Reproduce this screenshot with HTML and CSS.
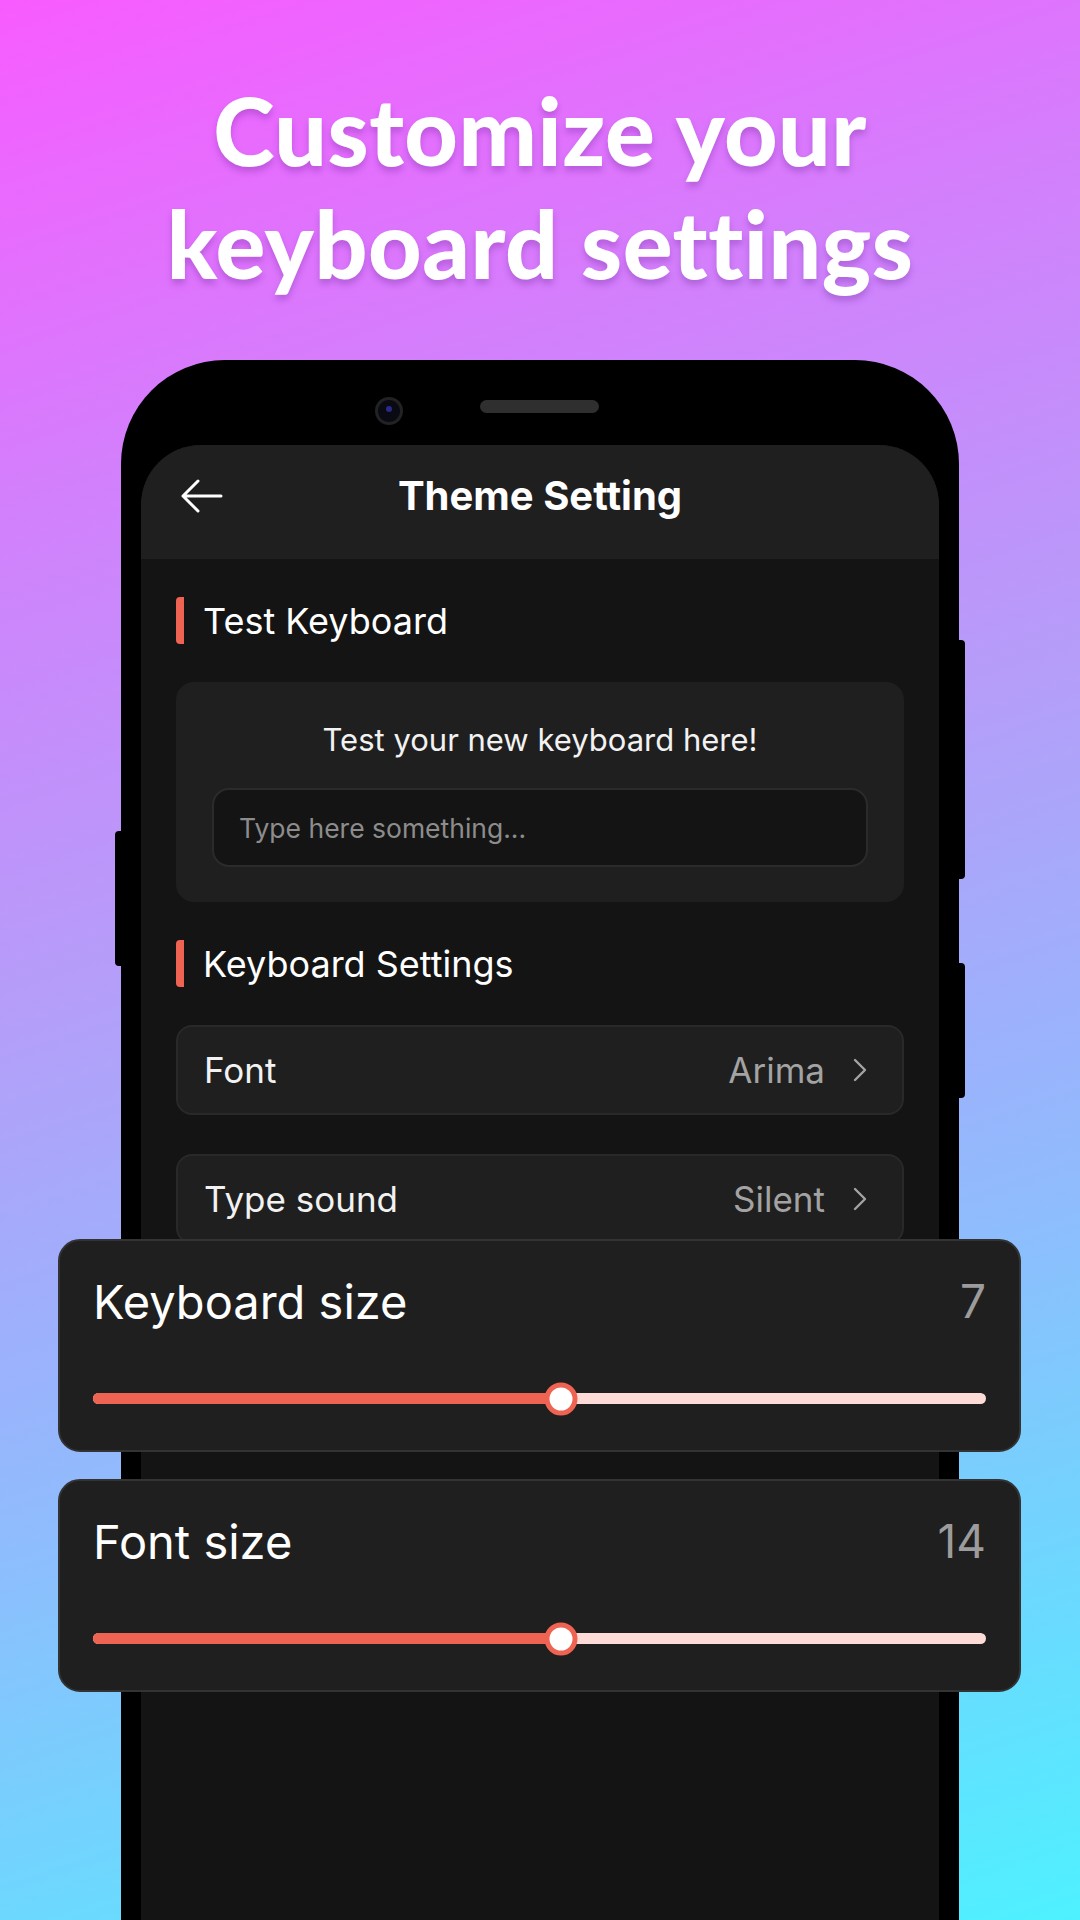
FILE: index.html
```html
<!DOCTYPE html>
<html lang="en">
<head>
    <meta charset="UTF-8">
    <meta name="viewport" content="width=device-width, initial-scale=1.0">
    <title>Theme Setting</title>
    <link rel="stylesheet" href="styles.css">
</head>
<body>
    <div class="page">
        <h1 class="headline">Customize your<br>keyboard settings</h1>

        <div class="phone">
            <span class="side-btn left-btn"></span>
            <span class="side-btn right-btn-1"></span>
            <span class="side-btn right-btn-2"></span>

            <div class="notch">
                <div class="camera"><span class="lens"></span></div>
                <div class="speaker"></div>
            </div>

            <div class="screen">
                <div class="app-bar">
                    <svg class="back" width="44" height="36" viewBox="0 0 44 36">
                        <path d="M42 18H4M19 3L4 18L19 33" fill="none" stroke="#fff" stroke-width="3" stroke-linecap="round" stroke-linejoin="round"/>
                    </svg>
                    <div class="app-title">Theme Setting</div>
                    <div></div>
                </div>

                <div class="content">
                    <div class="section-title">Test Keyboard</div>
                    <div class="test-card">
                        <div class="test-text">Test your new keyboard here!</div>
                        <div class="test-input">Type here something...</div>
                    </div>

                    <div class="section-title">Keyboard Settings</div>
                    <div class="setting-row">
                        <span class="row-label">Font</span>
                        <span class="row-value">Arima</span>
                        <svg class="chevron" width="16" height="26" viewBox="0 0 16 26">
                            <path d="M3 3L13 13L3 23" fill="none" stroke="#a3a3a3" stroke-width="2.4" stroke-linecap="round" stroke-linejoin="round"/>
                        </svg>
                    </div>
                    <div class="setting-row">
                        <span class="row-label">Type sound</span>
                        <span class="row-value">Silent</span>
                        <svg class="chevron" width="16" height="26" viewBox="0 0 16 26">
                            <path d="M3 3L13 13L3 23" fill="none" stroke="#a3a3a3" stroke-width="2.4" stroke-linecap="round" stroke-linejoin="round"/>
                        </svg>
                    </div>
                </div>
            </div>
        </div>

        <!-- cards floating over the phone -->
        <div class="float-cards">
            <div class="slider-card">
                <div class="slider-head">
                    <span class="slider-label">Keyboard size</span>
                    <span class="slider-value">7</span>
                </div>
                <div class="track">
                    <div class="track-fill" style="width: 52.4%"></div>
                    <div class="thumb" style="left: 52.4%"></div>
                </div>
            </div>
            <div class="slider-card">
                <div class="slider-head">
                    <span class="slider-label">Font size</span>
                    <span class="slider-value">14</span>
                </div>
                <div class="track">
                    <div class="track-fill" style="width: 52.4%"></div>
                    <div class="thumb" style="left: 52.4%"></div>
                </div>
            </div>
        </div>
    </div>
</body>
</html>
```

FILE: styles.css
```css
body {
    margin: 0;
    padding: 0;
    font-family: Inter, "Noto Sans", sans-serif;
}
.page {
    position: relative;
    width: 1080px;
    height: 1920px;
    overflow: hidden;
    background: linear-gradient(162deg, #f85bff 0%, #d37ffc 22%, #b49ef9 45%, #8fbcfd 68%, #4ef1ff 100%);
}
.headline {
    margin: 0;
    padding-top: 74px;
    font-family: Lato, sans-serif;
    font-weight: 900;
    font-size: 93px;
    line-height: 113px;
    letter-spacing: 0.5px;
    text-align: center;
    color: #fff;
    text-shadow: 0 5px 6px rgba(90, 30, 140, 0.28);
}

/* phone frame */
.phone {
    position: relative;
    width: 798px;
    height: 1561px;
    margin: 60px 0 0 121px;
    padding: 0 20px;
    background: #000;
    border-radius: 104px 104px 0 0;
}
.side-btn {
    position: absolute;
    width: 7px;
    background: #000;
}
.left-btn {
    left: -6px;
    top: 471px;
    height: 135px;
    border-radius: 4px 0 0 4px;
}
.right-btn-1 {
    right: -6px;
    top: 280px;
    height: 239px;
    border-radius: 0 4px 4px 0;
}
.right-btn-2 {
    right: -6px;
    top: 603px;
    height: 135px;
    border-radius: 0 4px 4px 0;
}
.notch {
    display: flex;
    align-items: center;
    gap: 77px;
    height: 85px;
    padding-left: 234px;
    padding-top: 16px;
    box-sizing: border-box;
}
.camera {
    width: 28px;
    height: 28px;
    border-radius: 50%;
    background: #0a0a12;
    border: 3px solid #222;
    box-sizing: border-box;
    position: relative;
}
.lens {
    position: absolute;
    left: 8px;
    top: 6px;
    width: 6px;
    height: 6px;
    border-radius: 50%;
    background: #2a2a8a;
}
.speaker {
    width: 119px;
    height: 13px;
    border-radius: 7px;
    background: #2f2f2f;
    margin-top: -8px;
}

/* screen */
.screen {
    height: 1476px;
    background: #141414;
    border-radius: 60px 60px 0 0;
    overflow: hidden;
}
.app-bar {
    display: grid;
    grid-template-columns: 1fr auto 1fr;
    align-items: center;
    height: 114px;
    padding: 0 38px;
    background: #1f1f1f;
}
.back {
    display: block;
    margin-bottom: 12px;
}
.app-title {
    font-size: 40px;
    font-weight: 700;
    color: #fff;
    margin-bottom: 14px;
}
.content {
    padding: 38px 35px 0;
}
.section-title {
    display: flex;
    align-items: center;
    height: 47px;
    padding-left: 19px;
    border-left: 8px solid #ef6352;
    border-radius: 4px;
    font-size: 36px;
    color: #fff;
    margin-bottom: 38px;
}
.test-card {
    background: #1f1f1f;
    border-radius: 18px;
    padding: 40px 36px 35px;
    margin-bottom: 38px;
}
.test-text {
    font-size: 31px;
    line-height: 36px;
    color: #f2f2f2;
    text-align: center;
    margin-bottom: 30px;
}
.test-input {
    display: flex;
    align-items: center;
    height: 79px;
    box-sizing: border-box;
    padding: 0 25px;
    border: 2px solid #2b2b2b;
    border-radius: 17px;
    background: #141414;
    font-size: 26.5px;
    color: #8c8c8c;
}
.setting-row {
    display: flex;
    align-items: center;
    height: 90px;
    box-sizing: border-box;
    padding: 0 34px 0 26px;
    margin-bottom: 39px;
    background: #1f1f1f;
    border: 2px solid #292929;
    border-radius: 16px;
}
.row-label {
    flex: 1;
    font-size: 35px;
    color: #f2f2f2;
}
.row-value {
    font-size: 35px;
    color: #a3a3a3;
    margin-right: 27px;
}
.chevron {
    display: block;
}

/* floating slider cards */
.float-cards {
    position: absolute;
    left: 58px;
    top: 1239px;
    width: 963px;
    display: flex;
    flex-direction: column;
    gap: 27px;
}
.slider-card {
    height: 213px;
    box-sizing: border-box;
    padding: 30px 33px 0 33px;
    background: #1f1f1f;
    border: 2px solid #333;
    border-radius: 22px;
}
.slider-head {
    display: flex;
    justify-content: space-between;
    align-items: center;
    height: 60px;
}
.slider-label {
    font-size: 47px;
    color: #fff;
}
.slider-value {
    font-size: 46px;
    color: #9c9c9c;
}
.track {
    position: relative;
    height: 11px;
    margin-top: 62px;
    border-radius: 6px;
    background: #fddcd8;
}
.track-fill {
    height: 100%;
    border-radius: 6px;
    background: #ef6352;
}
.thumb {
    position: absolute;
    top: 50%;
    width: 33px;
    height: 33px;
    box-sizing: border-box;
    border: 5px solid #ef6352;
    border-radius: 50%;
    background: #fff;
    transform: translate(-50%, -50%);
}
```
